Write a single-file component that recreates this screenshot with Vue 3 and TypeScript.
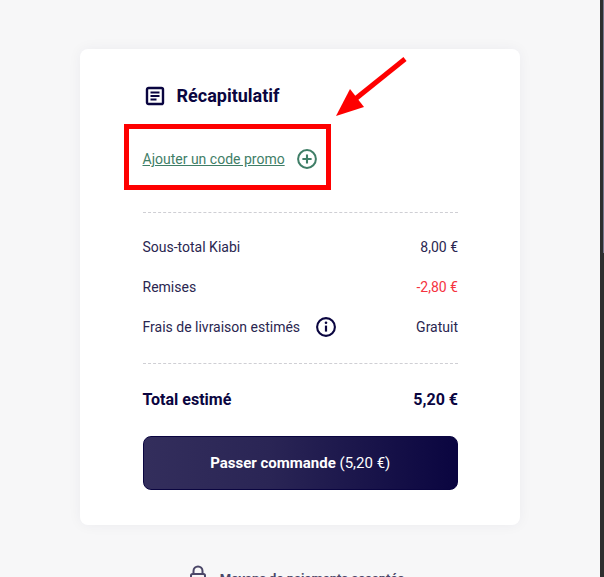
<script setup lang="ts">
const rows = [
  { label: 'Sous-total Kiabi', value: '8,00 €', discount: false, info: false },
  { label: 'Remises', value: '-2,80 €', discount: true, info: false },
  { label: 'Frais de livraison estimés', value: 'Gratuit', discount: false, info: true },
]
</script>

<template>
  <div class="page">
    <main class="content">
      <section class="card">
        <header class="head">
          <svg class="head-icon" viewBox="0 0 20 20" width="20" height="20" fill="none">
            <rect x="2" y="2" width="16" height="16" rx="1.6" stroke="#0a0540" stroke-width="2.4" />
            <path d="M5.5 6.4h9M5.5 10h9M5.5 13.6h6" stroke="#0a0540" stroke-width="2" />
          </svg>
          <h2 class="title">Récapitulatif</h2>
        </header>
        <div class="promo">
          <a class="promo-link">Ajouter un code promo</a>
          <svg viewBox="0 0 20 20" width="20" height="20" fill="none">
            <circle cx="10" cy="10" r="8.9" stroke="#3f7e67" stroke-width="2" />
            <path d="M5.4 10h9.2M10 5.4v9.2" stroke="#3f7e67" stroke-width="2.1" />
          </svg>
        </div>
        <div class="lines">
          <div v-for="row in rows" :key="row.label" class="line">
            <span class="line-label">
              {{ row.label }}
              <svg v-if="row.info" viewBox="0 0 20 20" width="20" height="20" fill="none">
                <circle cx="10" cy="10" r="8.9" stroke="#0a0540" stroke-width="2.1" />
                <path d="M10 8.6v6" stroke="#0a0540" stroke-width="2.2" />
                <circle cx="10" cy="5.8" r="1.3" fill="#0a0540" />
              </svg>
            </span>
            <span :class="{ discount: row.discount }">{{ row.value }}</span>
          </div>
        </div>
        <div class="total">
          <span>Total estimé</span>
          <span>5,20 €</span>
        </div>
        <button class="order" type="button"><b>Passer commande</b> (5,20 €)</button>
      </section>
      <div class="payment">
        <svg viewBox="0 0 18 22" width="18" height="22" fill="none">
          <path d="M4.5 9V6a4.5 4.5 0 0 1 9 0v3" stroke="#4b4768" stroke-width="2" />
          <rect x="2" y="9" width="14" height="11" rx="1.5" stroke="#4b4768" stroke-width="2" />
        </svg>
        <span>Moyens de paiements acceptés</span>
      </div>
    </main>
    <div class="scrollbar"><div class="thumb"></div></div>

    <div class="callout-box"></div>
    <svg class="callout-arrow" viewBox="0 0 80 70" width="80" height="70">
      <path d="M71 5 L20 46" stroke="#fe0000" stroke-width="5" fill="none" />
      <path d="M2 62 L16 35 L30 53 Z" fill="#fe0000" />
    </svg>
  </div>
</template>

<style>
html, body { margin: 0; overflow: hidden; }
</style>

<style scoped>
.page {
  position: relative;
  display: flex;
  height: 577px;
  overflow: hidden;
  background: #f7f7f8;
  font-family: Roboto, "Liberation Sans", sans-serif;
  color: #2a2650;
}
.content {
  flex: 1;
  min-width: 0;
  padding: 49px 80px 0;
  box-sizing: border-box;
}
.card {
  box-sizing: border-box;
  width: 440px;
  height: 476px;
  padding: 0 62px 0 62.5px;
  background: #fff;
  border-radius: 8px;
  box-shadow: 0 0 14px rgba(40, 40, 70, 0.05);
}
.head {
  display: flex;
  align-items: center;
  gap: 12px;
  height: 20px;
  padding: 37px 0 0 2px;
}
.head-icon { flex: none; }
.title {
  margin: 0;
  font-size: 18px;
  font-weight: 700;
  line-height: 20px;
  color: #0a0540;
}
.promo {
  display: flex;
  align-items: center;
  gap: 12px;
  height: 20px;
  margin-top: 43px;
}
.promo-link {
  font-size: 14px;
  line-height: 20px;
  color: #3f7e67;
  text-decoration: underline;
}
.lines {
  display: flex;
  flex-direction: column;
  gap: 20px;
  margin-top: 43px;
  padding: 24px 0 26px;
  border-top: 1px dashed #cfcfd4;
  border-bottom: 1px dashed #cfcfd4;
}
.line {
  display: flex;
  justify-content: space-between;
  align-items: center;
  height: 20px;
  font-size: 14px;
}
.line-label {
  display: flex;
  align-items: center;
  gap: 16px;
}
.discount { color: #f5333f; }
.total {
  display: flex;
  justify-content: space-between;
  margin-top: 26px;
  font-size: 16px;
  font-weight: 700;
  line-height: 20px;
  color: #0a0540;
}
.order {
  display: block;
  width: 100%;
  height: 54px;
  margin-top: 26px;
  padding: 0;
  border: 1px solid #0a0540;
  border-radius: 8px;
  background: linear-gradient(90deg, #332e5c 0%, #2a2555 40%, #0a0540 100%);
  color: #fff;
  font: 400 15px Roboto, "Liberation Sans", sans-serif;
}
.order b { font-weight: 700; }
.payment {
  display: flex;
  justify-content: center;
  align-items: flex-start;
  gap: 13px;
  margin-top: 40px;
  padding-right: 7px;
  font-size: 13px;
  font-weight: 700;
  line-height: 22px;
  color: #4b4768;
}
.payment span { padding-top: 3px; }
.scrollbar {
  flex: none;
  width: 4px;
  background: #2e2e2e;
}
.thumb {
  height: 253px;
  margin-left: 3px;
  background: #77758a;
}
.callout-box {
  position: absolute;
  left: 124px;
  top: 124px;
  width: 207px;
  height: 66px;
  box-sizing: border-box;
  border: 5px solid #fe0000;
}
.callout-arrow {
  position: absolute;
  left: 334px;
  top: 54px;
}
</style>
